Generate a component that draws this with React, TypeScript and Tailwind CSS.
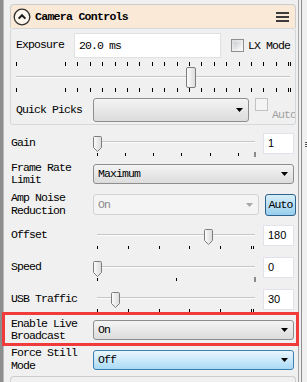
import React from 'react'

const mono = "font-['Liberation_Mono','DejaVu_Sans_Mono',monospace]"

function PointedThumb({ cx }: { cx: number }) {
  const a = cx - 4 + 0.5
  const b = cx + 5 - 0.5
  const mid = (a + b) / 2
  const d = `M${a} 9.5 Q${a} 8.5 ${a + 1} 8.5 H${b - 1} Q${b} 8.5 ${b} 9.5 V19.5 L${mid} 23.5 L${a} 19.5 Z`
  return <path d={d} fill="url(#thumbFill)" stroke="#7d7d7d" strokeWidth={1} />
}

function TrackSlider({ thumb, ticks, endGray }: { thumb: number; ticks: number[]; endGray?: boolean }) {
  return (
    <svg width={166} height={30} className="block shrink-0 overflow-visible">
      <defs>
        <linearGradient id="thumbFill" x1="0" y1="0" x2="1" y2="0">
          <stop offset="0" stopColor="#fcfcfc" />
          <stop offset="1" stopColor="#dadada" />
        </linearGradient>
      </defs>
      <rect x={5} y={13} width={158} height={1} fill="#c6c6c6" />
      <rect x={5} y={14} width={158} height={1} fill="#fbfbfb" />
      {ticks.map((t, i) => (
        <rect key={i} x={Math.round(t)} y={25} width={1} height={3} fill="#000" />
      ))}
      {endGray && <rect x={162} y={24} width={2} height={5} fill="#8a8a8a" />}
      <PointedThumb cx={thumb} />
    </svg>
  )
}

function ExposureSlider() {
  const ticks = [2, ...Array.from({ length: 19 }, (_, i) => 51 + i * 12.4), 276]
  return (
    <svg width={280} height={34} className="-ml-[2px] block">
      <defs>
        <linearGradient id="expThumb" x1="0" y1="0" x2="1" y2="0">
          <stop offset="0" stopColor="#fdfdfd" />
          <stop offset="1" stopColor="#dcdcdc" />
        </linearGradient>
      </defs>
      {ticks.map((t, i) => (
        <React.Fragment key={i}>
          <rect x={Math.round(t)} y={2} width={1} height={4} fill="#000" />
          <rect x={Math.round(t)} y={28} width={1} height={4} fill="#000" />
        </React.Fragment>
      ))}
      <rect x={2} y={16} width={274} height={1} fill="#c6c6c6" />
      <rect x={2} y={17} width={274} height={1} fill="#fbfbfb" />
      <rect x={172.5} y={7.5} width={9} height={20} rx={1.5} fill="url(#expThumb)" stroke="#7d7d7d" />
    </svg>
  )
}

function Arrow({ color = '#000' }: { color?: string }) {
  return (
    <svg width={7} height={4} className="block shrink-0">
      <path d="M0 0 H7 L3.5 4 Z" fill={color} />
    </svg>
  )
}

function Combo({ text, variant = 'normal', className }: { text?: string; variant?: 'normal' | 'active' | 'disabled'; className: string }) {
  const look =
    variant === 'active'
      ? 'border-[#3c7fb1] bg-gradient-to-b from-[#eaf6fd] to-[#a9daf6]'
      : variant === 'disabled'
        ? 'border-[#d3d3d3] bg-[#f4f4f4] text-[#8a8a8a]'
        : 'border-[#8e8e8e] bg-gradient-to-b from-[#f4f4f4] to-[#dcdcdc]'
  return (
    <div className={`flex shrink-0 items-center justify-between rounded-[3px] border pl-[4px] pr-[5px] ${look} ${className}`}>
      <span>{text}</span>
      <Arrow color={variant === 'disabled' ? '#a8a8a8' : '#000'} />
    </div>
  )
}

function NumBox({ value }: { value: string }) {
  return (
    <div className="flex h-[21px] w-[31px] shrink-0 items-center border border-[#e2e3ea] bg-white pl-[4px] font-['Liberation_Sans',Arial,sans-serif] text-[11px] tracking-normal">
      {value}
    </div>
  )
}

function Label({ children, className = '' }: { children: React.ReactNode; className?: string }) {
  return <div className={`shrink-0 leading-[12.5px] ${className}`}>{children}</div>
}

export default function App() {
  return (
    <div className={`relative flex h-[382px] w-[307px] overflow-hidden bg-[#f0f0f0] text-[11.5px] tracking-[-0.9px] text-black ${mono}`}>
      <div className="w-[3px] shrink-0 bg-[#8d8d8d]" />
      <div className="w-[1px] shrink-0 bg-[#b8b8b8]" />
      <div className="w-[6px] shrink-0" />

      <main className="flex w-[286px] shrink-0 flex-col overflow-hidden pt-[4px] [&>*]:shrink-0">
        {/* header */}
        <div className="flex h-[24px] items-center rounded-t-[4px] border border-b-0 border-[#cdcdcd] bg-[#fae9d7] pl-[2px] pr-[6px]">
          <svg width={18} height={18} viewBox="0 0 18 18" className="shrink-0">
            <circle cx={9} cy={9} r={7.8} fill="#fdf6ee" stroke="#2f2f2f" strokeWidth={1.3} />
            <path d="M5.6 10.6 L9 7.2 L12.4 10.6" fill="none" stroke="#1a1a1a" strokeWidth={2} />
          </svg>
          <span className="ml-[4px] font-bold tracking-[-0.7px]">Camera Controls</span>
          <div className="ml-auto flex w-[13px] flex-col gap-[2px]">
            <div className="h-[2px] bg-[#3a3a3a]" />
            <div className="h-[2px] bg-[#3a3a3a]" />
            <div className="h-[2px] bg-[#3a3a3a]" />
          </div>
        </div>

        {/* group box */}
        <div className="flex h-[97px] flex-col overflow-hidden rounded-[3px] border border-[#d3d8dc] pb-[2px] pl-[5px] pt-[4px] [&>*]:shrink-0">
          <div className="flex h-[25px] items-center">
            <Label className="w-[58px]">Exposure</Label>
            <div className="flex h-[25px] w-[147px] items-center border border-[#e0e0e0] bg-white pl-[4px]">20.0 ms</div>
            <div className="ml-[10px] h-[13px] w-[13px] border border-[#8e8f8f] bg-gradient-to-br from-[#dcdcdc] to-[#fbfbfb] p-[2px]">
              <div className="h-full w-full bg-gradient-to-br from-[#cbcfd5] to-[#f6f6f6]" />
            </div>
            <span className="ml-[4px]">LX Mode</span>
          </div>
          <div className="mt-[2px]">
            <ExposureSlider />
          </div>
          <div className="mt-[4px] flex h-[24px] items-start">
            <Label className="mt-[6px] w-[77px]">Quick Picks</Label>
            <Combo className="h-[24px] w-[156px]" />
            <div className="ml-[6px] h-[13px] w-[13px] shrink-0 border border-[#c2c2c2] bg-[#f4f4f4]" />
            <span className="ml-[4px] mt-[8px] text-[#a0a0a0]">Auto</span>
          </div>
        </div>

        {/* rows */}
        <div className="flex flex-col pl-[1px] [&>*]:shrink-0">
          <div className="flex h-[36px] items-center">
            <Label className="w-[81px]">Gain</Label>
            <TrackSlider thumb={5} ticks={[5, 33, 61, 89, 118, 146]} endGray />
            <div className="ml-[5px]"><NumBox value="1" /></div>
          </div>

          <div className="flex h-[26px] items-center">
            <Label className="w-[82px]">Frame Rate<br />Limit</Label>
            <Combo text="Maximum" className="h-[20px] w-[201px]" />
          </div>

          <div className="flex h-[35px] items-center">
            <Label className="w-[82px]">Amp Noise<br />Reduction</Label>
            <Combo text="On" variant="disabled" className="h-[21px] w-[166px]" />
            <div className="ml-[6px] flex h-[22px] w-[31px] items-center justify-center rounded-[3px] border border-[#2c628b] bg-gradient-to-b from-[#d6eefa] to-[#98cfee]">
              Auto
            </div>
          </div>

          <div className="flex h-[27px] items-center">
            <Label className="w-[81px]">Offset</Label>
            <TrackSlider thumb={116} ticks={[5, 35.8, 66.6, 97.4, 128.2, 159, 161]} />
            <div className="ml-[5px]"><NumBox value="180" /></div>
          </div>

          <div className="flex h-[37px] items-center">
            <Label className="w-[81px]">Speed</Label>
            <TrackSlider thumb={5} ticks={[5, 84]} endGray />
            <div className="ml-[5px]"><NumBox value="0" /></div>
          </div>

          <div className="flex h-[26px] items-center">
            <Label className="w-[81px]">USB Traffic</Label>
            <TrackSlider thumb={23} ticks={[5, 35.8, 66.6, 97.4, 128.2, 159, 161]} />
            <div className="ml-[5px]"><NumBox value="30" /></div>
          </div>

          <div className="flex h-[36px] items-center">
            <Label className="w-[82px]">Enable Live<br />Broadcast</Label>
            <Combo text="On" className="h-[20px] w-[201px]" />
          </div>

          <div className="flex h-[23px] items-center">
            <Label className="w-[82px]">Force Still<br />Mode</Label>
            <Combo text="Off" variant="active" className="h-[20px] w-[201px]" />
          </div>
        </div>

        <div className="mt-[5px] h-[12px] rounded-t-[4px] border border-b-0 border-[#cdcdcd]" />
      </main>

      {/* right frame */}
      <div className="flex w-[11px] shrink-0">
        <div className="w-[2px]" />
        <div className="w-[1px] bg-[#a6a6a6]" />
        <div className="w-[2px]" />
        <div className="w-[1px] bg-[#8e8e8e]" />
        <div className="flex w-[5px] flex-col items-end gap-[1px] pt-[142px]">
          <div className="h-[1px] w-[2px] bg-[#555]" />
          <div className="h-[1px] w-[2px] bg-[#555]" />
          <div className="h-[1px] w-[2px] bg-[#555]" />
        </div>
      </div>

      {/* annotation */}
      <div className="absolute left-[2px] top-[312px] h-[34px] w-[297px] border-[3px] border-[#ef3b3b]" />
    </div>
  )
}
